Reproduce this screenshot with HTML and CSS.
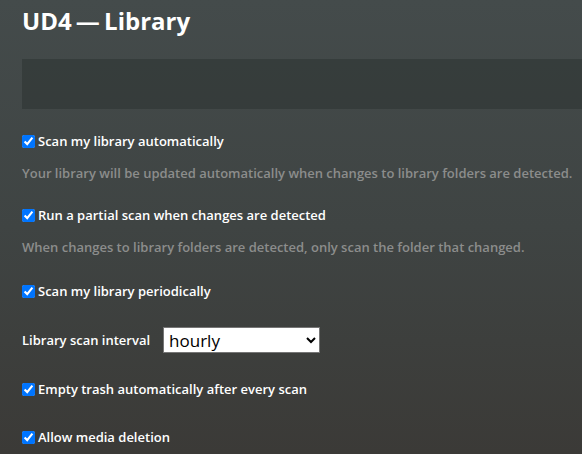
FILE: index.html
```html
<!DOCTYPE html>
<html>
<head>
<meta charset="utf-8">
<link rel="stylesheet" href="styles.css">
</head>
<body>
<div class="page">
  <h1 class="title">UD4 — Library</h1>
  <div class="panel"></div>
  <div class="row gap-first"><label class="check"><input type="checkbox" checked><span>Scan my library automatically</span></label></div>
  <div class="row desc gap-desc">Your library will be updated automatically when changes to library folders are detected.</div>
  <div class="row gap-after-desc"><label class="check"><input type="checkbox" checked><span>Run a partial scan when changes are detected</span></label></div>
  <div class="row desc gap-desc">When changes to library folders are detected, only scan the folder that changed.</div>
  <div class="row gap-after-desc2"><label class="check"><input type="checkbox" checked><span>Scan my library periodically</span></label></div>
  <div class="row gap-wide"><span class="label">Library scan interval</span>
    <select class="select"><option>hourly</option><option>daily</option><option>weekly</option></select>
  </div>
  <div class="row gap-wide"><label class="check"><input type="checkbox" checked><span>Empty trash automatically after every scan</span></label></div>
  <div class="row gap-wide2"><label class="check"><input type="checkbox" checked><span>Allow media deletion</span></label></div>
</div>
</body>
</html>
```

FILE: styles.css
```css
html, body {
  margin: 0;
  height: 100%;
}
body {
  background: linear-gradient(180deg, #444b4b 0%, #3f4443 50%, #3b3a37 100%);
  font-family: "Open Sans", "Noto Sans", sans-serif;
  color: #ffffff;
  overflow: hidden;
}
.page {
  padding-left: 22px;
  display: flex;
  flex-direction: column;
}
.title {
  margin: 0;
  height: 59px;
  box-sizing: border-box;
  padding-top: 5px;
  font-size: 24px;
  line-height: 32px;
  font-weight: 700;
  word-spacing: -2px;
  color: #ffffff;
}
.panel {
  height: 50px;
  background: rgba(40, 46, 45, 0.45);
}
.row {
  height: 24px;
  display: flex;
  align-items: center;
  font-size: 13px;
  font-weight: 600;
}
.desc {
  color: #8c8d8c;
}
.gap-first { margin-top: 20px; }
.gap-desc { margin-top: 8px; }
.gap-after-desc { margin-top: 18px; }
.gap-after-desc2 { margin-top: 20px; }
.gap-wide { margin-top: 25px; }
.gap-wide2 { margin-top: 24px; }
.check {
  display: flex;
  align-items: center;
}
.check input {
  width: 13px;
  height: 13px;
  margin: 0 3px 0 0;
}
.label {
  margin-right: 13px;
}
.select {
  width: 157px;
  height: 26px;
  flex: none;
  font-family: "Open Sans", "Noto Sans", sans-serif;
  font-size: 17px;
  font-weight: 400;
  color: #000;
  background: #fff;
  border: 1px solid #767676;
  border-radius: 0;
  padding: 0 1px;
}
```
